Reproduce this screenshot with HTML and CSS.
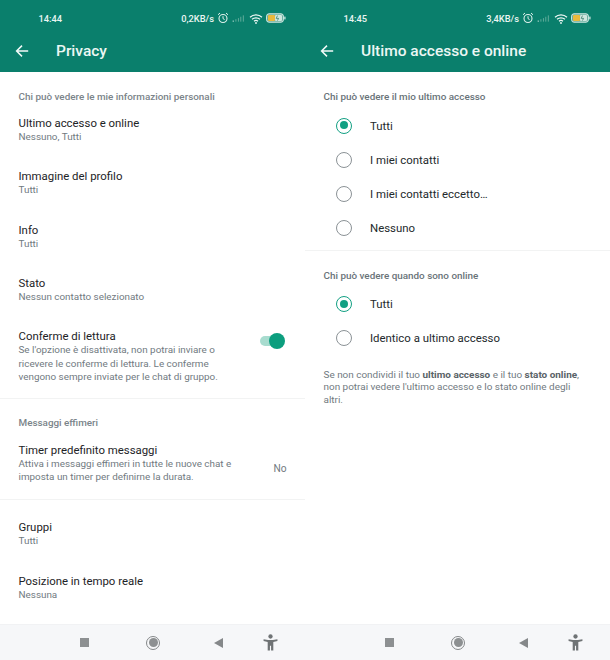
FILE: index.html
```html
<!DOCTYPE html>
<html lang="it">
<head>
<meta charset="utf-8">
<title>Privacy</title>
<link rel="stylesheet" href="styles.css">
</head>
<body>
<svg class="defs" width="0" height="0" aria-hidden="true">
  <symbol id="alarm" viewBox="0 0 12 12"><circle cx="6" cy="6.5" r="4" fill="none" stroke="#dff1ec" stroke-width="1.1"/><path d="M6 4.2V6.6L7.6 7.6M1 2.8 3 1M11 2.8 9 1" fill="none" stroke="#dff1ec" stroke-width="1"/></symbol>
  <symbol id="signal" viewBox="0 0 20 10"><rect x="1" y="8" width="1.5" height="1.5" fill="#e6f4f0"/><rect x="5" y="6" width="1.2" height="3.5" fill="#6fb3a3"/><rect x="8.5" y="4.5" width="1.2" height="5" fill="#6fb3a3"/><rect x="12" y="2.5" width="1.2" height="7" fill="#6fb3a3"/><rect x="15.5" y=".5" width="1.2" height="9" fill="#6fb3a3"/></symbol>
  <symbol id="wifi" viewBox="0 0 14 11"><path d="M1 4.2C4.4 1 9.6 1 13 4.2M3 6.3C5.2 4.3 8.8 4.3 11 6.3M5 8.3C6.2 7.3 7.8 7.3 9 8.3" fill="none" stroke="#eef8f5" stroke-width="1.2"/><circle cx="7" cy="10" r=".9" fill="#eef8f5"/></symbol>
  <symbol id="battery" viewBox="0 0 20 10"><rect x=".6" y=".8" width="16.8" height="8.4" rx="2.4" fill="#5fa898" stroke="#eef8f5" stroke-width=".9"/><rect x="2" y="2" width="7" height="6" rx="1" fill="#e9b93c"/><rect x="9" y="2" width="7" height="6" rx="1" fill="#cfe6df"/><path d="M11.5 2.6 10.2 5.4H12.6L11.4 7.6" fill="none" stroke="#3b7d6c" stroke-width=".8"/><rect x="18.3" y="3.6" width="1.2" height="2.8" fill="#dff1ec"/></symbol>
  <symbol id="back" viewBox="0 0 14 14"><path d="M13.2 7H1.8M7 1.6 1.6 7 7 12.4" fill="none" stroke="#f2faf8" stroke-width="1.5"/></symbol>
  <symbol id="person" viewBox="0 0 16 18"><circle cx="8" cy="2.6" r="2.3" fill="#6f7375"/><path d="M.6 5.4 5.4 6.4H10.6L15.4 5.4V7.3L11 8.5V17.6H8.6V12.5H7.4V17.6H5V8.5L.6 7.3Z" fill="#6f7375"/></symbol>
</svg>

<main class="screens">
  <section class="screen">
    <header class="appbar">
      <div class="status">
        <span class="time">14:44</span>
        <span class="status-right">
          <span class="speed">0,2KB/s</span>
          <svg class="i-alarm"><use href="#alarm"/></svg>
          <svg class="i-signal"><use href="#signal"/></svg>
          <svg class="i-wifi"><use href="#wifi"/></svg>
          <svg class="i-battery"><use href="#battery"/></svg>
        </span>
      </div>
      <div class="toolbar">
        <svg class="i-back"><use href="#back"/></svg>
        <h1 class="title">Privacy</h1>
      </div>
    </header>
    <div class="content">
      <div class="group group-first">
        <h2 class="caption">Chi può vedere le mie informazioni personali</h2>
        <div class="row"><div class="row-title">Ultimo accesso e online</div><div class="row-sub">Nessuno, Tutti</div></div>
        <div class="row"><div class="row-title">Immagine del profilo</div><div class="row-sub">Tutti</div></div>
        <div class="row"><div class="row-title">Info</div><div class="row-sub">Tutti</div></div>
        <div class="row"><div class="row-title">Stato</div><div class="row-sub">Nessun contatto selezionato</div></div>
        <div class="row row-action">
          <div class="row-text">
            <div class="row-title">Conferme di lettura</div>
            <div class="row-sub">Se l'opzione è disattivata, non potrai inviare o<br>ricevere le conferme di lettura. Le conferme<br>vengono sempre inviate per le chat di gruppo.</div>
          </div>
          <span class="switch"><span class="switch-track"></span><span class="switch-thumb"></span></span>
        </div>
      </div>
      <div class="group">
        <h2 class="caption">Messaggi effimeri</h2>
        <div class="row row-action row-timer">
          <div class="row-text">
            <div class="row-title">Timer predefinito messaggi</div>
            <div class="row-sub">Attiva i messaggi effimeri in tutte le nuove chat e<br>imposta un timer per definirne la durata.</div>
          </div>
          <span class="row-value">No</span>
        </div>
      </div>
      <div class="group group-last">
        <div class="row"><div class="row-title">Gruppi</div><div class="row-sub">Tutti</div></div>
        <div class="row"><div class="row-title">Posizione in tempo reale</div><div class="row-sub">Nessuna</div></div>
      </div>
    </div>
    <nav class="navbar">
      <span class="nav-square"></span>
      <span class="nav-circle"></span>
      <span class="nav-tri"></span>
      <svg class="i-person"><use href="#person"/></svg>
    </nav>
  </section>

  <section class="screen">
    <header class="appbar">
      <div class="status">
        <span class="time">14:45</span>
        <span class="status-right">
          <span class="speed">3,4KB/s</span>
          <svg class="i-alarm"><use href="#alarm"/></svg>
          <svg class="i-signal"><use href="#signal"/></svg>
          <svg class="i-wifi"><use href="#wifi"/></svg>
          <svg class="i-battery"><use href="#battery"/></svg>
        </span>
      </div>
      <div class="toolbar">
        <svg class="i-back"><use href="#back"/></svg>
        <h1 class="title">Ultimo accesso e online</h1>
      </div>
    </header>
    <div class="content">
      <div class="group group-first radios-a">
        <h2 class="caption caption-dark">Chi può vedere il mio ultimo accesso</h2>
        <div class="radio on"><span class="dot"></span>Tutti</div>
        <div class="radio"><span class="dot"></span>I miei contatti</div>
        <div class="radio"><span class="dot"></span>I miei contatti eccetto…</div>
        <div class="radio"><span class="dot"></span>Nessuno</div>
      </div>
      <div class="group radios-b">
        <h2 class="caption caption-dark">Chi può vedere quando sono online</h2>
        <div class="radio on"><span class="dot"></span>Tutti</div>
        <div class="radio"><span class="dot"></span>Identico a ultimo accesso</div>
        <p class="note">Se non condividi il tuo <b>ultimo accesso</b> e il tuo <b>stato online</b>,<br>non potrai vedere l'ultimo accesso e lo stato online degli<br>altri.</p>
      </div>
    </div>
    <nav class="navbar">
      <span class="nav-square"></span>
      <span class="nav-circle"></span>
      <span class="nav-tri"></span>
      <svg class="i-person"><use href="#person"/></svg>
    </nav>
  </section>
</main>
</body>
</html>
```

FILE: styles.css
```css
* { box-sizing: border-box; }
html, body { margin: 0; padding: 0; background: #fff; }
body { width: 610px; height: 660px; overflow: hidden; font-family: Roboto, "Liberation Sans", sans-serif; }
.defs { display: block; height: 0; }
.screens { display: grid; grid-template-columns: 305px 305px; height: 660px; }
.screen { display: flex; flex-direction: column; height: 660px; min-width: 0; background: #fff; }

.appbar { height: 71.5px; flex: none; background: #0a7f6c; color: #fff; }
.status { height: 36px; padding: 0 19px 0 38.5px; display: flex; align-items: center; justify-content: space-between; font-size: 9.3px; font-weight: 500; color: #e9f5f2; }
.status-right { display: flex; align-items: center; }
.speed { margin-right: 3px; }
.i-alarm { width: 12px; height: 12px; margin-right: 3px; }
.i-signal { width: 14px; height: 9px; margin-right: 3px; }
.i-wifi { width: 14px; height: 11px; margin-right: 3px; }
.i-battery { width: 20px; height: 10px; }

.toolbar { display: flex; align-items: center; height: 30px; padding-left: 15px; }
.i-back { width: 14px; height: 14px; margin-right: 27px; }
.title { margin: 0; font-size: 15.5px; font-weight: 500; color: #ecf7f4; }

.content { flex: 1; min-height: 0; overflow: hidden; }
.group { padding: 17px 0 0; border-bottom: 1px solid #f2f3f3; }
.group-first { padding-top: 18px; }
.caption { margin: 0 0 7px; padding-left: 18.5px; font-size: 9.9px; line-height: 14px; font-weight: 500; color: #7b848a; }
.caption-dark { color: #697379; }

.row { height: 53.4px; padding: 4.3px 18.5px 0; }
.row-title { font-size: 11.4px; line-height: 16px; color: #1d2326; }
.row-sub { font-size: 9.9px; line-height: 13.4px; color: #717a7f; margin-top: -1px; }
.row-action { display: flex; justify-content: space-between; align-items: flex-start; height: auto; padding-bottom: 14px; }
.row-timer { padding-top: 5px; padding-bottom: 16px; }
.row-value { margin-top: 21px; font-size: 10.2px; color: #717a7f; }

.group-last { padding-top: 14.7px; border-bottom: 0; }

.switch { position: relative; flex: none; width: 28px; height: 16px; margin-top: 5px; }
.switch-track { position: absolute; left: 1px; top: 3px; width: 20px; height: 10px; border-radius: 5px; background: #a8dccf; }
.switch-thumb { position: absolute; right: 2px; top: 0; width: 16px; height: 16px; border-radius: 50%; background: #0c9e7e; }

.radio { display: flex; align-items: center; height: 34px; padding-left: 31px; font-size: 11.4px; color: #23292c; }
.dot { position: relative; flex: none; width: 16px; height: 16px; margin-right: 18px; border: 1.5px solid #8b9296; border-radius: 50%; background: #fff; }
.on .dot { border-color: #12a083; }
.on .dot::after { content: ""; position: absolute; left: 2.5px; top: 2.5px; width: 8px; height: 8px; border-radius: 50%; background: #12a083; }
.radios-a .caption { margin-bottom: 5.3px; }
.radios-a { padding-bottom: 5.2px; }
.radios-b .caption { margin-bottom: 4.5px; }
.radios-b { border-bottom: 0; padding-top: 18px; }
.note { margin: 13.5px 0 0; padding: 0 18.5px; font-size: 9.95px; line-height: 12.3px; color: #717a7f; }
.note b { font-weight: 700; color: #5a6368; }

.navbar { flex: none; height: 36px; background: #f6f7f9; border-top: 1px solid #f1f2f4; display: flex; align-items: center; padding-left: 80px; }
.nav-square { width: 9px; height: 9px; background: #8d9092; margin-right: 57px; }
.nav-circle { position: relative; width: 14px; height: 14px; margin-right: 54px; border: 1px solid #85888a; border-radius: 50%; }
.nav-circle::after { content: ""; position: absolute; left: 1.5px; top: 1.5px; width: 9px; height: 9px; border-radius: 50%; background: #8d9092; }
.nav-tri { width: 0; height: 0; margin-right: 40px; border-style: solid; border-width: 5px 9px 5px 0; border-color: transparent #85888a transparent transparent; }
.i-person { width: 15px; height: 17px; }
```
